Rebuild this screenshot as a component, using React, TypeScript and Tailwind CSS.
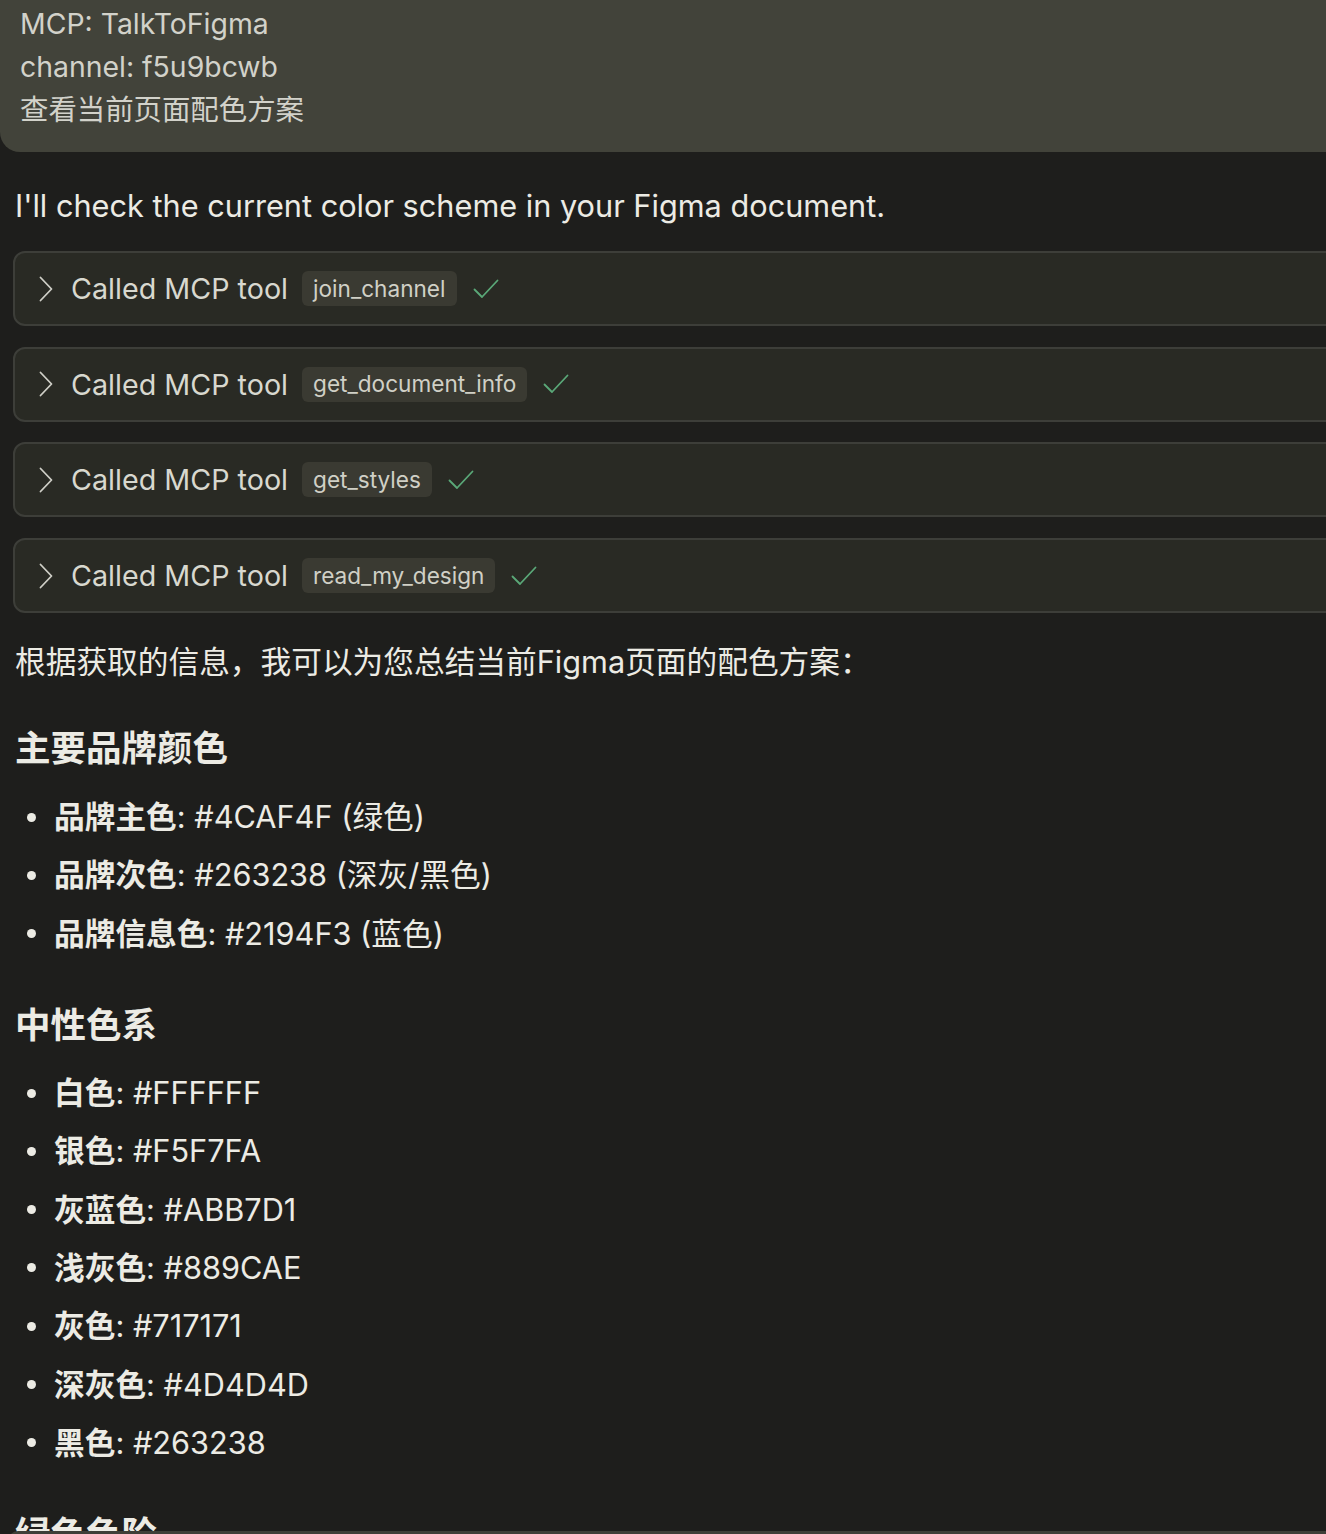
const TOOLS = ["join_channel", "get_document_info", "get_styles", "read_my_design"];

const BRAND = [
  { label: "品牌主色", value: "#4CAF4F (绿色)" },
  { label: "品牌次色", value: "#263238 (深灰/黑色)" },
  { label: "品牌信息色", value: "#2194F3 (蓝色)" },
];

const NEUTRAL = [
  { label: "白色", value: "#FFFFFF" },
  { label: "银色", value: "#F5F7FA" },
  { label: "灰蓝色", value: "#ABB7D1" },
  { label: "浅灰色", value: "#889CAE" },
  { label: "灰色", value: "#717171" },
  { label: "深灰色", value: "#4D4D4D" },
  { label: "黑色", value: "#263238" },
];

function ToolCard({ name }: { name: string }) {
  return (
    <div className="flex items-center h-[75px] w-[1400px] rounded-[12px] border-2 border-[#3d3e39] bg-[#292a24] pl-[24px]">
      <svg width="14" height="26" viewBox="0 0 14 26" fill="none" stroke="#cfcfc7" strokeWidth="1.8" strokeLinecap="round" strokeLinejoin="round">
        <polyline points="1.5,1.5 12.5,13 1.5,24.5" />
      </svg>
      <span className="ml-[18px] text-[28.7px] text-[#d8d8cf]">Called MCP tool</span>
      <span className="ml-[14px] h-[35px] flex items-center px-[11px] rounded-[6px] bg-[#3a3a32] text-[22.6px] text-[#d0d0c6]">
        {name}
      </span>
      <svg className="ml-[16px]" width="26" height="20" viewBox="0 0 26 20" fill="none" stroke="#5aa878" strokeWidth="1.8" strokeLinecap="round" strokeLinejoin="round">
        <polyline points="1.5,10.5 9,18 24.5,1.5" />
      </svg>
    </div>
  );
}

function Item({ label, value }: { label: string; value: string }) {
  return (
    <li className="flex items-center h-[58.3px]">
      <span className="w-[9px] h-[9px] rounded-full bg-[#ecebe4] ml-[27px] mr-[18px]" />
      <span className="font-bold">{label}</span>
      <span>: {value}</span>
    </li>
  );
}

export default function App() {
  return (
    <div
      className="relative w-[1326px] h-[1534px] overflow-hidden bg-[#1e1e1c] text-[#ecebe4]"
      style={{ fontFamily: 'Inter, "Noto Sans CJK SC", sans-serif' }}
    >
      <div className="w-[1400px] h-[152px] rounded-bl-[20px] bg-[#42433a] pl-[20px] pt-[2px] text-[28.4px] leading-[43px] text-[#d2d2ca]">
        <div>MCP: TalkToFigma</div>
        <div>channel: f5u9bcwb</div>
        <div>查看当前页面配色方案</div>
      </div>

      <p className="mt-[32px] ml-[15px] text-[30.7px] leading-[43px]">
        I'll check the current color scheme in your Figma document.
      </p>

      <div className="mt-[24px] ml-[13px] flex flex-col gap-[20.7px]">
        {TOOLS.map((t) => (
          <ToolCard key={t} name={t} />
        ))}
      </div>

      <p className="mt-[27px] ml-[15px] text-[30.7px] leading-[43px]">
        根据获取的信息，我可以为您总结当前Figma页面的配色方案：
      </p>

      <h2 className="mt-[41px] ml-[15px] text-[35.5px] leading-[50px] font-bold">主要品牌颜色</h2>
      <ul className="mt-[14px] text-[30.7px]">
        {BRAND.map((b) => (
          <Item key={b.label} {...b} />
        ))}
      </ul>

      <h2 className="mt-[38px] ml-[15px] text-[35.5px] leading-[50px] font-bold">中性色系</h2>
      <ul className="mt-[13px] text-[30.7px]">
        {NEUTRAL.map((b) => (
          <Item key={b.label} {...b} />
        ))}
      </ul>

      <h2 className="mt-[38px] ml-[15px] text-[35.5px] leading-[50px] font-bold">绿色色阶</h2>

      <div className="absolute left-[8px] top-[1531px] w-[1400px] h-[20px] rounded-tl-[10px] bg-[#3e3f38]" />
    </div>
  );
}
